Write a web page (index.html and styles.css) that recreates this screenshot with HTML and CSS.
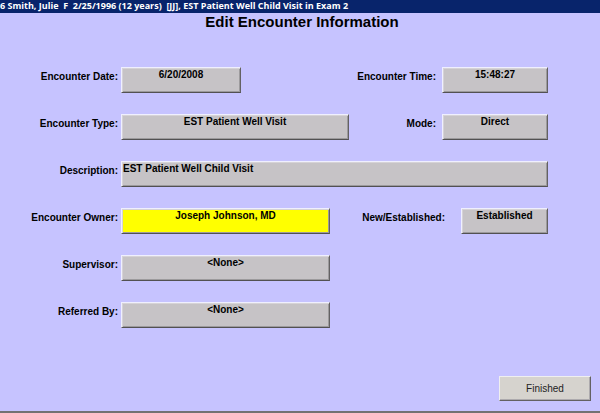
FILE: index.html
```html
<!DOCTYPE html>
<html lang="en">
<head>
<meta charset="utf-8">
<title>Edit Encounter Information</title>
<link rel="stylesheet" href="styles.css">
</head>
<body>
<header class="titlebar">6 Smith, Julie&nbsp; F&nbsp; 2/25/1996 (12 years)&nbsp; [JJ], EST Patient Well Child Visit in Exam 2</header>
<main class="page">
  <h1 class="heading">Edit Encounter Information</h1>
  <form class="form">
    <div class="row">
      <label class="label" for="date">Encounter Date:</label>
      <button type="button" class="field field-date" id="date">6/20/2008</button>
      <div class="side">
        <label class="side-label" for="time">Encounter Time:</label>
        <button type="button" class="field field-side" id="time">15:48:27</button>
      </div>
    </div>
    <div class="row">
      <label class="label" for="type">Encounter Type:</label>
      <button type="button" class="field field-type" id="type">EST Patient Well Visit</button>
      <div class="side">
        <label class="side-label" for="mode">Mode:</label>
        <button type="button" class="field field-side" id="mode">Direct</button>
      </div>
    </div>
    <div class="row">
      <label class="label" for="description">Description:</label>
      <button type="button" class="field field-description" id="description">EST Patient Well Child Visit</button>
    </div>
    <div class="row">
      <label class="label" for="owner">Encounter Owner:</label>
      <button type="button" class="field field-person field-required" id="owner">Joseph Johnson, MD</button>
      <div class="side side-wide">
        <label class="side-label" for="status">New/Established:</label>
        <button type="button" class="field field-status" id="status">Established</button>
      </div>
    </div>
    <div class="row">
      <label class="label" for="supervisor">Supervisor:</label>
      <button type="button" class="field field-person" id="supervisor">&lt;None&gt;</button>
    </div>
    <div class="row">
      <label class="label" for="referrer">Referred By:</label>
      <button type="button" class="field field-person" id="referrer">&lt;None&gt;</button>
    </div>
  </form>
  <footer class="actions">
    <button type="button" class="finish">Finished</button>
  </footer>
</main>
</body>
</html>
```

FILE: styles.css
```css
* {
  box-sizing: border-box;
}

body {
  margin: 0;
  min-height: 100vh;
  display: flex;
  flex-direction: column;
  background: #c6c3ff;
  color: #000;
  font-family: "Liberation Sans", Arial, sans-serif;
  font-size: 10px;
  font-weight: bold;
}

.titlebar {
  height: 13px;
  line-height: 12px;
  background: #08246b;
  color: #fff;
  font-family: "Open Sans", Tahoma, sans-serif;
  font-size: 9px;
  white-space: nowrap;
  overflow: hidden;
}

.page {
  flex: 1;
  display: flex;
  flex-direction: column;
  border-bottom: 2px solid #737173;
}

.heading {
  margin: 0;
  padding-left: 4px;
  line-height: 18px;
  font-size: 15px;
  text-align: center;
}

.form {
  display: flex;
  flex-direction: column;
  gap: 21px;
  padding: 36px 52px 0 0;
}

.row {
  display: flex;
  align-items: flex-start;
  gap: 3px;
}

.label,
.side-label {
  line-height: 20px;
  white-space: nowrap;
}

.label {
  width: 118px;
  text-align: right;
}

.side {
  display: flex;
  gap: 6px;
  margin-left: auto;
}

.side-wide {
  gap: 16px;
}

.field {
  display: flex;
  justify-content: center;
  align-items: flex-start;
  height: 26px;
  padding: 0 1px;
  border: 1px solid;
  border-color: #efefff #636163 #525152 #efefff;
  box-shadow: inset 1px 1px #d6d3d6, inset -1px -1px #9c9a9c;
  background: #c6c3c6;
  color: #000;
  font: inherit;
  line-height: 14px;
}

.field-date {
  width: 120px;
}

.field-type {
  width: 228px;
}

.field-side {
  width: 106px;
}

.field-description {
  flex: 1;
  justify-content: flex-start;
}

.field-person {
  width: 209px;
}

.field-status {
  width: 87px;
}

.field-required {
  background: #ff0;
}

.actions {
  display: flex;
  justify-content: flex-end;
  margin-top: auto;
  padding: 0 9px 10px;
}

.finish {
  width: 92px;
  height: 25px;
  padding: 0;
  border: 1px solid;
  border-color: #efefef #636163 #636163 #efefef;
  box-shadow: inset -1px -1px #adaaad;
  background: #d6d3ce;
  color: #222;
  font-family: inherit;
  font-size: 10px;
}
```
